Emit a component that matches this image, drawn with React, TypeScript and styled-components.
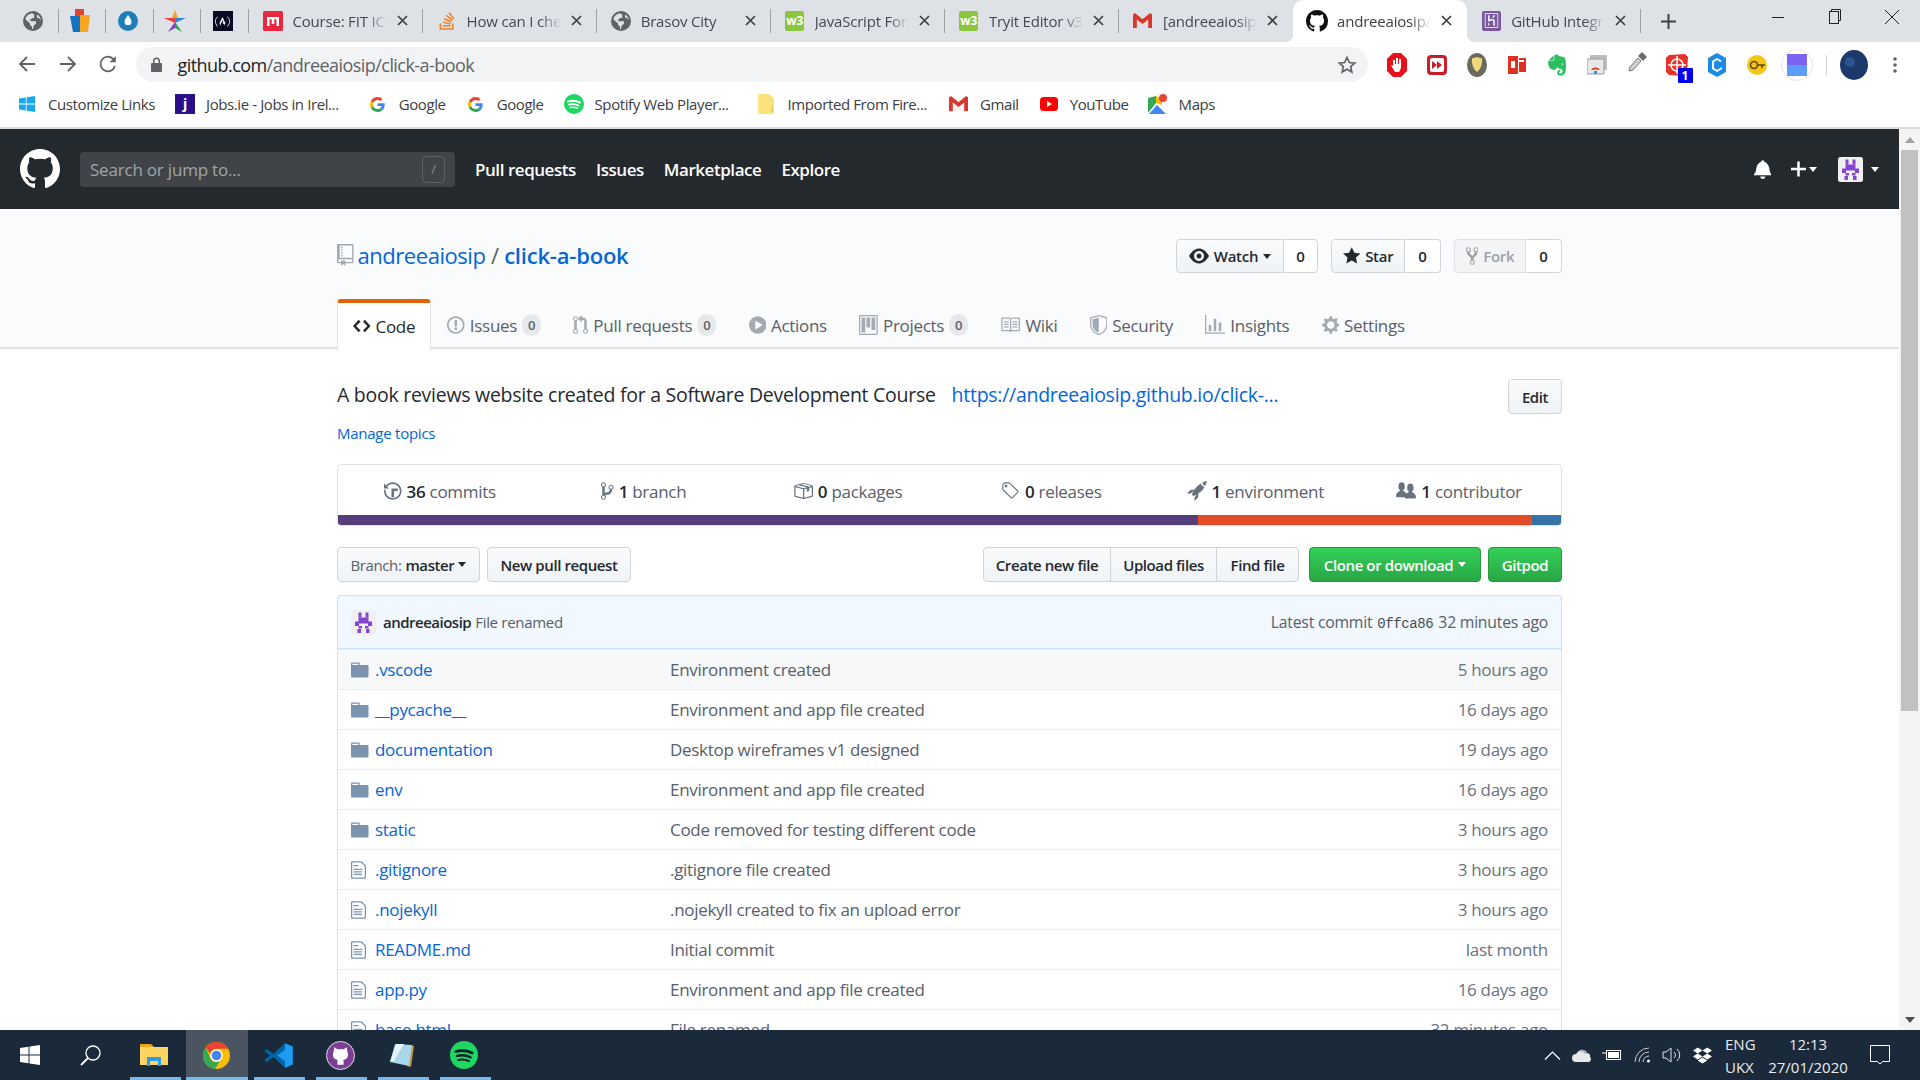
import React from "react";
import styled, { createGlobalStyle } from "styled-components";
import { FaEvernote, FaDropbox, FaStackOverflow, FaFreeCodeCamp } from "react-icons/fa";
import { SiHeroku } from "react-icons/si";

const UI = `"Open Sans", "Noto Sans", Arial, sans-serif`;
const Global = createGlobalStyle`
  html, body { margin: 0; padding: 0; height: 100%; overflow: hidden; background: #fff; }
  #root { height: 100vh; }
  * { box-sizing: border-box; }
  svg { display: block; flex: none; }
`;

const P: Record<string, [number, string]> = {
  github: [16, "M8 0C3.58 0 0 3.58 0 8c0 3.54 2.29 6.53 5.47 7.59.4.07.55-.17.55-.38 0-.19-.01-.82-.01-1.49-2.01.37-2.53-.49-2.69-.94-.09-.23-.48-.94-.82-1.13-.28-.15-.68-.52-.01-.53.63-.01 1.08.58 1.23.82.72 1.21 1.87.87 2.33.66.07-.52.28-.87.51-1.07-1.78-.2-3.64-.89-3.64-3.95 0-.87.31-1.59.82-2.15-.08-.2-.36-1.02.08-2.12 0 0 .67-.21 2.2.82.64-.18 1.32-.27 2-.27.68 0 1.36.09 2 .27 1.53-1.04 2.2-.82 2.2-.82.44 1.1.16 1.92.08 2.12.51.56.82 1.27.82 2.15 0 3.07-1.87 3.75-3.65 3.95.29.25.54.73.54 1.48 0 1.07-.01 1.93-.01 2.2 0 .21.15.46.55.38A8.013 8.013 0 0016 8c0-4.42-3.58-8-8-8z"],
  repo: [12, "M4 9H3V8h1v1zm0-3H3v1h1V6zm0-2H3v1h1V4zm0-2H3v1h1V2zm8-1v12c0 .55-.45 1-1 1H6v2l-1.5-1.5L3 16v-2H1c-.55 0-1-.45-1-1V1c0-.55.45-1 1-1h10c.55 0 1 .45 1 1zm-1 10H1v2h2v-1h3v1h5v-2zm0-10H2v9h9V1z"],
  code: [14, "M9.5 3L8 4.5 11.5 8 8 11.5 9.5 13 14 8 9.5 3zm-5 0L0 8l4.5 5L6 11.5 2.5 8 6 4.5 4.5 3z"],
  issue: [14, "M7 2.3c3.14 0 5.7 2.56 5.7 5.7s-2.56 5.7-5.7 5.7A5.71 5.71 0 011.3 8c0-3.14 2.56-5.7 5.7-5.7zM7 1C3.14 1 0 4.14 0 8s3.14 7 7 7 7-3.14 7-7-3.14-7-7-7zm1 3H6v5h2V4zm0 6H6v2h2v-2z"],
  pr: [12, "M11 11.28V5c-.03-.78-.34-1.47-.94-2.06C9.46 2.35 8.78 2.03 8 2H7V0L4 3l3 3V4h1c.27.02.48.11.69.31.21.2.3.42.31.69v6.28A1.993 1.993 0 0010 15a1.993 1.993 0 001-3.72zm-1 2.92c-.66 0-1.2-.55-1.2-1.2 0-.65.55-1.2 1.2-1.2.65 0 1.2.55 1.2 1.2 0 .65-.55 1.2-1.2 1.2zM4 3c0-1.11-.89-2-2-2a1.993 1.993 0 00-1 3.72v6.56A1.993 1.993 0 002 15a1.993 1.993 0 001-3.72V4.72c.59-.34 1-.98 1-1.72zm-.8 10c0 .66-.55 1.2-1.2 1.2-.65 0-1.2-.55-1.2-1.2 0-.65.55-1.2 1.2-1.2.65 0 1.2.55 1.2 1.2zM2 4.2C1.34 4.2.8 3.65.8 3c0-.65.55-1.2 1.2-1.2.65 0 1.2.55 1.2 1.2 0 .65-.55 1.2-1.2 1.2z"],
  play: [14, "M7 1a7 7 0 100 14A7 7 0 007 1zM5 4.5v7L11 8 5 4.5z"],
  project: [15, "M10 12h3V2h-3v10zm-4-2h3V2H6v8zm-4 4h3V2H2v12zm-1 1h13V1H1v14zM14 0H1a1 1 0 00-1 1v14a1 1 0 001 1h13a1 1 0 001-1V1a1 1 0 00-1-1z"],
  book: [16, "M3 5h4v1H3V5zm0 3h4V7H3v1zm0 2h4V9H3v1zm11-5h-4v1h4V5zm0 2h-4v1h4V7zm0 2h-4v1h4V9zm2-6v9c0 .55-.45 1-1 1H9.5l-1 1-1-1H2c-.55 0-1-.45-1-1V3c0-.55.45-1 1-1h5.5l1 1 1-1H15c.55 0 1 .45 1 1zm-8 .5L7.5 3H2v9h6V3.5zm7-.5H9.5l-.5.5V12h6V3z"],
  shield: [14, "M0 2l7-2 7 2v6.02C14 12.69 8.69 16 7 16c-1.69 0-7-3.31-7-7.98V2zm1 .75L7 1l6 1.75v5.268C13 12.104 8.449 15 7 15c-1.449 0-6-2.896-6-6.982V2.75zm1 .75L7 2v12c-1.207 0-5-2.482-5-5.985V3.5z"],
  graph: [16, "M16 14v1H0V0h1v14h15zM5 13H3V8h2v5zm4 0H7V3h2v10zm4 0h-2V6h2v7z"],
  gear: [14, "M14 8.77v-1.6l-1.94-.64-.45-1.09.88-1.84-1.13-1.13-1.81.91-1.09-.45-.69-1.92h-1.6l-.63 1.94-1.11.45-1.84-.88-1.13 1.13.91 1.81-.45 1.09L0 7.23v1.59l1.94.64.45 1.09-.88 1.84 1.13 1.13 1.81-.91 1.09.45.69 1.92h1.59l.63-1.94 1.11-.45 1.84.88 1.13-1.13-.92-1.81.47-1.09L14 8.75v.02zM7 11c-1.66 0-3-1.34-3-3s1.34-3 3-3 3 1.34 3 3-1.34 3-3 3z"],
  eye: [16, "M8.06 2C3 2 0 8 0 8s3 6 8.06 6C13 14 16 8 16 8s-3-6-7.94-6zM8 12c-2.2 0-4-1.78-4-4 0-2.2 1.8-4 4-4 2.22 0 4 1.8 4 4 0 2.22-1.78 4-4 4zm2-4c0 1.11-.89 2-2 2-1.11 0-2-.89-2-2 0-1.11.89-2 2-2 1.11 0 2 .89 2 2z"],
  star: [14, "M14 6l-4.9-.64L7 1 4.9 5.36 0 6l3.6 3.26L2.67 14 7 11.67 11.33 14l-.93-4.74L14 6z"],
  fork: [10, "M8 1a1.993 1.993 0 00-1 3.72V6L5 8 3 6V4.72A1.993 1.993 0 002 1a1.993 1.993 0 00-1 3.72V6.5l3 3v1.78A1.993 1.993 0 005 15a1.993 1.993 0 001-3.72V9.5l3-3V4.72A1.993 1.993 0 008 1zM2 4.2C1.34 4.2.8 3.65.8 3c0-.65.55-1.2 1.2-1.2.65 0 1.2.55 1.2 1.2 0 .65-.55 1.2-1.2 1.2zm3 10c-.66 0-1.2-.55-1.2-1.2 0-.65.55-1.2 1.2-1.2.65 0 1.2.55 1.2 1.2 0 .65-.55 1.2-1.2 1.2zm3-10c-.66 0-1.2-.55-1.2-1.2 0-.65.55-1.2 1.2-1.2.65 0 1.2.55 1.2 1.2 0 .65-.55 1.2-1.2 1.2z"],
  history: [14, "M8 13H6V6h5v2H8v5zM7 1C4.81 1 2.87 2.02 1.59 3.59L0 2v4h4L2.5 4.5C3.55 3.17 5.17 2.3 7 2.3c3.14 0 5.7 2.56 5.7 5.7s-2.56 5.7-5.7 5.7A5.71 5.71 0 011.3 8c0-.34.03-.67.09-1H.08C.03 7.33 0 7.66 0 8c0 3.86 3.14 7 7 7s7-3.14 7-7-3.14-7-7-7z"],
  branch: [10, "M10 5c0-1.11-.89-2-2-2a1.993 1.993 0 00-1 3.72v.3c-.02.52-.23.98-.63 1.38-.4.4-.86.61-1.38.63-.83.02-1.48.16-2 .45V4.72a1.993 1.993 0 00-1-3.72C.88 1 0 1.89 0 3a2 2 0 001 1.72v6.56c-.59.35-1 .99-1 1.72 0 1.11.89 2 2 2 1.11 0 2-.89 2-2 0-.53-.2-1-.53-1.36.09-.06.48-.41.59-.47.25-.11.56-.17.94-.17 1.05-.05 1.95-.45 2.75-1.25S8.95 7.77 9 6.73h-.02C9.59 6.37 10 5.73 10 5zM2 1.8c.66 0 1.2.55 1.2 1.2 0 .65-.55 1.2-1.2 1.2C1.35 4.2.8 3.65.8 3c0-.65.55-1.2 1.2-1.2zm0 12.41c-.66 0-1.2-.55-1.2-1.2 0-.65.55-1.2 1.2-1.2.65 0 1.2.55 1.2 1.2 0 .65-.55 1.2-1.2 1.2zm6-8c-.66 0-1.2-.55-1.2-1.2 0-.65.55-1.2 1.2-1.2.65 0 1.2.55 1.2 1.2 0 .65-.55 1.2-1.2 1.2z"],
  pkg: [16, "M1 4.27v7.47c0 .45.3.84.75.97l6.5 1.73c.16.05.34.05.5 0l6.5-1.73c.45-.13.75-.52.75-.97V4.27c0-.45-.3-.84-.75-.97l-6.5-1.74a1.4 1.4 0 00-.5 0L1.75 3.3c-.45.13-.75.52-.75.97zm7 9.09l-6-1.59V5l6 1.61v6.75zM2 4l2.5-.67L11 5.06l-2.5.67L2 4zm13 7.77l-6 1.59V6.61l2-.55V8.5l2-.53V5.53L15 5v6.77zm-2-7.24L6.5 2.8l2-.53L15 4l-2 .53z"],
  tag: [15, "M7.73 1.73C7.26 1.26 6.62 1 5.96 1H3.5C2.13 1 1 2.13 1 3.5v2.47c0 .66.27 1.3.73 1.77l6.06 6.06c.39.39 1.02.39 1.41 0l4.59-4.59a.996.996 0 000-1.41L7.73 1.73zM2.38 7.09c-.31-.3-.47-.7-.47-1.13V3.5c0-.88.72-1.59 1.59-1.59h2.47c.42 0 .83.16 1.13.47l6.14 6.13-4.73 4.73-6.13-6.15zM3.01 3h2v2H3V3h.01z"],
  rocket: [16, "M12.17 3.83c-.27-.27-.47-.55-.63-.88-.16-.31-.27-.66-.34-1.02-.58.33-1.16.7-1.73 1.13-.58.44-1.14.94-1.69 1.48-.7.7-1.33 1.81-1.78 2.45H3L0 10h3l2-2c-.34.77-1.02 2.98-1 3l1 1c.02.02 2.23-.64 3-1l-2 2v3l3-3v-3c.64-.45 1.75-1.09 2.45-1.78.55-.55 1.05-1.13 1.47-1.7.44-.58.81-1.16 1.14-1.72-.36-.08-.7-.19-1.03-.34a3.39 3.39 0 01-.86-.63zM16 0s-.09.38-.3 1.06c-.2.7-.55 1.58-1.06 2.66-.7-.08-1.27-.33-1.66-.75-.38-.4-.63-.95-.7-1.64C13.36.8 14.25.44 14.95.25 15.65.03 16 0 16 0z"],
  org: [16, "M16 12.999c0 .439-.45 1-1 1H7.995c-.539 0-.994-.447-.995-.999H1c-.54 0-1-.561-1-1 0-2.634 3-4 3-4s.229-.409 0-1c-.841-.621-1.058-.59-1-3 .058-2.419 1.367-3 2.5-3s2.442.58 2.5 3c.058 2.41-.159 2.379-1 3-.229.59 0 1 0 1s1.549.711 2.42 2.088C9.196 9.369 10 8.999 10 8.999s.229-.409 0-1c-.841-.62-1.058-.59-1-3 .058-2.419 1.367-3 2.5-3s2.437.581 2.495 3c.059 2.41-.158 2.38-1 3-.229.59 0 1 0 1s3.005 1.366 3.005 4"],
  folder: [14, "M13 4H7V3c0-.66-.31-1-1-1H1c-.55 0-1 .45-1 1v10c0 .55.45 1 1 1h12c.55 0 1-.45 1-1V5c0-.55-.45-1-1-1zM6 4H1V3h5v1z"],
  file: [12, "M6 5H2V4h4v1zM2 8h7V7H2v1zm0 2h7V9H2v1zm0 2h7v-1H2v1zm10-7.5V14c0 .55-.45 1-1 1H1c-.55 0-1-.45-1-1V2c0-.55.45-1 1-1h7.5L12 4.5zM11 5L8 2H1v12h10V5z"],
  bell: [14, "M14 12v1H0v-1l.73-.58c.77-.77.81-2.55 1.19-4.42C2.69 3.23 6 2 6 2c0-.55.45-1 1-1s1 .45 1 1c0 0 3.39 1.23 4.16 5 .38 1.88.42 3.66 1.19 4.42l.66.58H14zm-7 4c1.11 0 2-.89 2-2H5c0 1.11.89 2 2 2z"],
  plus: [12, "M12 9H7v5H5V9H0V7h5V2h2v5h5v2z"],
};

const Oct = ({ n, h = 20, c = "currentColor" }: { n: string; h?: number; c?: string }) => {
  const [w, d] = P[n];
  return (
    <svg width={(w * h) / 16} height={h} viewBox={`0 0 ${w} 16`} fill={c} fillRule="evenodd">
      <path d={d} />
    </svg>
  );
};

const Identicon = ({ s, bg = "#f0f0f0" }: { s: number; bg?: string }) => (
  <svg width={s} height={s} viewBox="0 0 10 10">
    <rect width="10" height="10" rx="1" fill={bg} />
    <g fill="#8545d0">
      <rect x="3" y="1" width="1.2" height="2" /><rect x="5.8" y="1" width="1.2" height="2" />
      <rect x="3" y="3" width="4" height="2.4" /><rect x="1.6" y="4.6" width="1.6" height="1.8" />
      <rect x="6.8" y="4.6" width="1.6" height="1.8" /><rect x="3" y="6.4" width="1.4" height="1" />
      <rect x="5.6" y="6.4" width="1.4" height="1" /><rect x="2.6" y="7.6" width="1.4" height="1.6" />
      <rect x="6" y="7.6" width="1.4" height="1.6" />
    </g>
  </svg>
);

const GoogleG = ({ s = 16 }: { s?: number }) => (
  <svg width={s} height={s} viewBox="0 0 48 48">
    <path fill="#EA4335" d="M24 9.5c3.54 0 6.71 1.22 9.21 3.6l6.85-6.85C35.9 2.38 30.47 0 24 0 14.62 0 6.51 5.38 2.56 13.22l7.98 6.19C12.43 13.72 17.74 9.5 24 9.5z" />
    <path fill="#4285F4" d="M46.98 24.55c0-1.57-.15-3.09-.38-4.55H24v9.02h12.94c-.58 2.96-2.26 5.48-4.78 7.18l7.73 6c4.51-4.18 7.09-10.36 7.09-17.65z" />
    <path fill="#FBBC05" d="M10.53 28.59c-.48-1.45-.76-2.99-.76-4.59s.27-3.14.76-4.59l-7.98-6.19C.92 16.46 0 20.12 0 24c0 3.88.92 7.54 2.56 10.78l7.97-6.19z" />
    <path fill="#34A853" d="M24 48c6.48 0 11.93-2.13 16.08-5.81l-7.73-6c-2.15 1.45-4.92 2.3-8.35 2.3-6.26 0-11.57-4.22-13.47-9.91l-7.98 6.19C6.51 42.62 14.62 48 24 48z" />
  </svg>
);
const Globe = () => (
  <svg width="20" height="20" viewBox="0 0 20 20">
    <circle cx="10" cy="10" r="10" fill="#5f6368" />
    <path fill="#dee1e6" d="M9 2.2C5.6 2.6 3 5 2.3 8.2L7 12.5v1.2l2 2V18c-1 0-1-.1-1-.1v.1c.6.1 1.5 0 2 0l.5-3 2.5-2.5v-2.2H8L6.5 8.5H8l1-1.5h2.2V3.5L9 2.2zM14 3.6v3.1h1.5l2.4 2.4C17.6 6.8 16 4.700 14 3.600z" />
  </svg>
);
const GmailM = ({ s = 20 }: { s?: number }) => (
  <svg width={s} height={s * 0.8} viewBox="0 0 20 16">
    <path fill="#d9d9d9" d="M3 2h14v14H3z" opacity=".3" />
    <path fill="#d8372d" d="M0 1.500 2 0l8 6.500L18 0l2 1.500V16h-4V6.800l-6 4.900-6-4.900V16H0z" />
  </svg>
);
const W3Box = styled.span`
  width: 19px; height: 20px; background: #8cc63f; border-radius: 2px; color: #fff;
  font: 700 12px/20px ${UI}; text-align: center; flex: none;
`;
const Spotify = ({ s = 20, stroke = "#fff" }: { s?: number; stroke?: string }) => (
  <svg width={s} height={s} viewBox="0 0 24 24">
    <circle cx="12" cy="12" r="12" fill="#1ed760" />
    <g fill="none" stroke={stroke} strokeLinecap="round">
      <path strokeWidth="2.400" d="M5 9c4.500-1.300 9.500-1 14 1.200" />
      <path strokeWidth="2" d="M6 12.800c4-1 8-.7 11.600 1.200" />
      <path strokeWidth="1.600" d="M7 16.300c3.300-.8 6.600-.5 9.400 1" />
    </g>
  </svg>
);
const WinLogo = ({ s, c }: { s: number; c: string }) => (
  <svg width={s} height={s} viewBox="0 0 20 20" fill={c}>
    <path d="M0 3l8.500-1.200V9.500H0zM9.500 1.600 20 0v9.500H9.500zM0 10.500h8.500v7.700L0 17zM9.500 10.500H20V20L9.500 18.400z" />
  </svg>
);
const FccBox = styled.span`
  width: 20px; height: 20px; background: #0a0a23; display: flex; align-items: center; justify-content: center; flex: none;
`;
const HerokuBox = styled.span`
  width: 19px; height: 20px; border-radius: 2px; background: #79589f; display: flex; align-items: center; justify-content: center; flex: none;
`;
const JobsIcon = styled.span`
  width: 20px; height: 20px; background: #2b0f8a; color: #fff; font: 700 14px/20px ${UI}; text-align: center; flex: none;
`;

const favs: Record<string, React.ReactNode> = {
  globe: <Globe />,
  office: (
    <svg width="22" height="24" viewBox="0 0 22 24">
      <path fill="#e0452c" d="M6 0h9v9H6z" /><path fill="#f5a623" d="M11 6h10l-2 17h-8z" /><path fill="#1573c4" d="M1 7h10v16H4z" />
    </svg>
  ),
  drop: (
    <svg width="20" height="20" viewBox="0 0 20 20">
      <circle cx="10" cy="10" r="10" fill="#1b7fb5" /><path fill="#fff" d="M10 4c2 3 3.500 4.700 3.500 6.800a3.500 3.500 0 01-7 0C6.500 8.700 8 7 10 4z" />
    </svg>
  ),
  star: (
    <svg width="22" height="24" viewBox="0 0 22 24">
      <path fill="#f2a51f" d="M11 1l3 8H11z" /><path fill="#e8413a" d="M0 9h11v5z" /><path fill="#2e8ad8" d="M22 9H11v5z" /><path fill="#2da44e" d="M11 13l7 10-7-4z" /><path fill="#7a3fb8" d="M11 13l-7 10 7-4z" /><path fill="#f2a51f" d="M11 1L8 9H11z" />
    </svg>
  ),
  fcc: <FccBox><FaFreeCodeCamp size={15} color="#fff" /></FccBox>,
  moodle: (
    <svg width="20" height="20" viewBox="0 0 20 20">
      <rect width="20" height="20" rx="1.500" fill="#e8283e" />
      <path fill="#fff" d="M4 6h12v9h-2.500V8.300h-2.200V13H8.700V8.300H6.500V15H4z" />
    </svg>
  ),
  so: <FaStackOverflow size={20} color="#f48024" />,
  w3: <W3Box>w3</W3Box>,
  gmail: <GmailM s={19} />,
  github: <Oct n="github" h={22} c="#111" />,
  heroku: <HerokuBox><SiHeroku size={15} color="#fff" /></HerokuBox>,
};

const Shell = styled.div`
  height: 100vh; display: flex; flex-direction: column; font-family: ${UI}; overflow: hidden;
`;
const TabStrip = styled.div`
  height: 42px; flex: none; background: #dee1e6; display: flex; padding-left: 11px;
`;
const PinnedTab = styled.div`
  width: 47.500px; height: 42px; position: relative; display: flex; align-items: center; justify-content: center; padding-right: 4px;
  &::after { content: ""; position: absolute; right: 0; top: 9px; height: 24px; width: 1px; background: #9da1a6; }
`;
const Tab = styled.div<{ $active?: boolean; $nosep?: boolean }>`
  width: 174.100px; height: 42px; position: relative; display: flex; align-items: center; padding: 0 14px 1px 14px; gap: 10px;
  background: ${(p) => (p.$active ? "#fff" : "transparent")};
  border-radius: ${(p) => (p.$active ? "10px 10px 0 0" : "0")};
  color: ${(p) => (p.$active ? "#3c4043" : "#45494f")};
  &::after {
    content: ""; position: absolute; right: 0; top: 9px; height: 24px; width: 1px;
    background: ${(p) => (p.$nosep || p.$active ? "transparent" : "#9da1a6")};
  }
`;
const ActiveFlare = styled.span<{ $side: "left" | "right" }>`
  position: absolute; bottom: 0; width: 8px; height: 8px;
  ${(p) => p.$side}: -8px;
  background: radial-gradient(circle at ${(p) => (p.$side === "left" ? "0 0" : "100% 0")}, transparent 8px, #fff 8.500px);
`;
const TabIcon = styled.span`
  width: 20px; height: 22px; display: flex; align-items: center; justify-content: center; flex: none;
`;
const TabTitle = styled.span`
  flex: 1; min-width: 0; overflow: hidden; white-space: nowrap; font-size: 15px; line-height: 20px; letter-spacing: -0.2px;
  -webkit-mask-image: linear-gradient(90deg, #000 78%, transparent 100%);
  mask-image: linear-gradient(90deg, #000 78%, transparent 100%);
`;
const TabClose = styled.svg`
  width: 11px; height: 11px; flex: none; margin-right: 1px; stroke: #3c4043; stroke-width: 1.700;
`;
const NewTab = styled.div`
  width: 54px; display: flex; align-items: center; justify-content: center; height: 42px;
`;
const WinControls = styled.div`
  margin-left: auto; display: flex; height: 42px;
`;
const WinBtn = styled.div`
  width: 56.670px; height: 34px; display: flex; align-items: center; justify-content: center;
`;

const Toolbar = styled.div`
  height: 42px; flex: none; background: #fff; display: flex; align-items: center; padding-left: 17px;
`;
const NavBtn = styled.div`
  width: 40.500px; display: flex; padding-left: 1px; align-items: center; height: 24px; margin-top: 2px;
`;
const Omnibox = styled.div`
  width: 1232px; margin-left: -3px; height: 35px; margin-top: 3px; border-radius: 18px; background: #f1f3f4; display: flex; align-items: center; padding: 0 11px 0 15px;
`;
const Url = styled.span`
  font-size: 18px; color: #5f6368; margin-left: 16px; flex: 1; letter-spacing: -0.55px;
  b { color: #202124; font-weight: 400; }
`;
const Exts = styled.div`
  display: flex; align-items: center; margin-left: 9px; margin-top: 3px;
`;
const Ext = styled.div`
  width: 40px; height: 30px; display: flex; align-items: center; justify-content: center; position: relative;
`;
const ExtBadge = styled.span`
  position: absolute; right: 4px; bottom: -3px; width: 15px; height: 15px; background: #0000f0; color: #fff; font: 700 12px/15px ${UI}; text-align: center; border-radius: 1px;
`;
const ExtSep = styled.span`
  width: 1px; height: 20px; background: #d0d3d7; margin: 0 13px 0 9px;
`;
const Dots = styled.svg`
  margin-left: 25px;
`;

const Bookmarks = styled.div`
  height: 45px; flex: none; background: #fff; display: flex; align-items: center; padding-left: 17px; border-bottom: 2px solid #dcdcdc; gap: 21px; padding-bottom: 3px;
`;
const Bm = styled.div<{ $ml?: number }>`
  display: flex; align-items: center; gap: 11px; font-size: 15px; color: #3c4043; letter-spacing: -0.4px; white-space: nowrap;
  margin-left: ${(p) => p.$ml || 0}px;
`;
const BmIcon = styled.span`
  width: 20px; height: 20px; display: flex; align-items: center; justify-content: center; flex: none;
`;

const Below = styled.div`
  flex: 1; min-height: 0; display: flex;
`;
const Page = styled.div`
  flex: 1; min-width: 0; overflow: hidden; background: #fff; color: #24292e;
`;
const Scrollbar = styled.div`
  width: 21px; flex: none; background: #f4f4f4; display: flex; flex-direction: column; padding-left: 2px; padding-right: 2px;
`;
const ScrollArrow = styled.div<{ $down?: boolean }>`
  height: 21px; flex: none; display: flex; align-items: center; justify-content: center;
  &::before { content: ""; border-left: 5px solid transparent; border-right: 5px solid transparent;
    ${(p) => (p.$down ? "border-top: 6px solid #505050;" : "border-bottom: 6px solid #a3a3a3;")} }
`;
const Thumb = styled.div`
  height: 561px; background: #c1c1c1; flex: none;
`;
const ScrollRest = styled.div`flex: 1;`;

const Header = styled.header`
  height: 80px; background: #24292e; display: flex; align-items: center; padding: 0 20px; color: #fff;
`;
const Search = styled.div`
  width: 375px; height: 35px; margin-left: 20px; border-radius: 4px; background: #404448; display: flex; align-items: center; justify-content: space-between; padding: 0 10px;
  color: #a0a4a8; font-size: 17px; letter-spacing: -0.2px;
`;
const Slash = styled.span`
  width: 23px; height: 27px; border: 1px solid #5d6165; border-radius: 4px; display: flex; align-items: center; justify-content: center; font-size: 13px; color: #8b8f93;
`;
const HeadNav = styled.nav`
  display: flex; gap: 20px; margin-left: 20px; font-size: 17px; font-weight: 600; letter-spacing: -0.45px;
`;
const HeadRight = styled.div`
  margin-left: auto; display: flex; align-items: center;
`;
const HGap = styled.span<{ $w: number }>`
  width: ${(p) => p.$w}px; flex: none;
`;
const Caret = styled.span<{ $c?: string }>`
  display: inline-block; border-left: 4.500px solid transparent; border-right: 4.500px solid transparent;
  border-top: 5px solid ${(p) => p.$c || "currentColor"}; flex: none;
`;

const Pagehead = styled.div`
  height: 140px; background: #fafbfc; border-bottom: 2px solid #e1e4e8;
`;
const Container = styled.div`
  width: 1225px; margin: 0 auto;
`;
const TitleRow = styled.div`
  height: 90px; padding-top: 30px; display: flex; align-items: flex-start;
`;
const Title = styled.h1`
  margin: 0; height: 32px; font-size: 22px; font-weight: 400; display: flex; align-items: center; gap: 4px; color: #586069; letter-spacing: -0.450px;
  strong { font-weight: 600; color: #0366d6; letter-spacing: -0.2px; }
  a { color: #0366d6; }
`;
const TitleSlash = styled.span`
  margin: 0 1.500px;
`;
const Actions = styled.div`
  margin-left: auto; display: flex; gap: 13px;
`;
const Social = styled.div`
  display: flex; height: 34px;
`;
const SocialBtn = styled.div<{ $w: number; $off?: boolean }>`
  width: ${(p) => p.$w}px; display: flex; align-items: center; justify-content: center; gap: 5px;
  border: 1px solid ${(p) => (p.$off ? "#dfe2e5" : "#d1d5da")}; border-radius: 4px 0 0 4px;
  background: ${(p) => (p.$off ? "#f3f4f6" : "linear-gradient(#fafbfc, #eff3f6)")};
  color: ${(p) => (p.$off ? "#9ca1a8" : "#24292e")};
  font-size: 15px; font-weight: 600; letter-spacing: -0.3px;
`;
const SocialCount = styled.div<{ $w: number }>`
  width: ${(p) => p.$w}px; display: flex; align-items: center; justify-content: center; background: #fff;
  border: 1px solid #d1d5da; border-left: 0; border-radius: 0 4px 4px 0; font-size: 15px; font-weight: 600; color: #24292e;
`;
const TabNav = styled.div`
  display: flex; height: 50px; margin-bottom: -2px; position: relative;
`;
const RepoTab = styled.div<{ $sel?: boolean }>`
  height: ${(p) => (p.$sel ? "52px" : "50px")}; display: flex; align-items: center; gap: 5px;
  padding: 0 ${(p) => (p.$sel ? "15px" : "16.150px")}; padding-top: ${(p) => (p.$sel ? "0" : "2px")};
  padding-bottom: ${(p) => (p.$sel ? "2px" : "0")};
  font-size: 17px; letter-spacing: -0.3px; color: ${(p) => (p.$sel ? "#24292e" : "#586069")};
  background: ${(p) => (p.$sel ? "#fff" : "transparent")};
  border: ${(p) => (p.$sel ? "1px solid #e1e4e8" : "0")};
  border-top: ${(p) => (p.$sel ? "4px solid #e36209" : "0")};
  border-bottom: 0;
  border-radius: ${(p) => (p.$sel ? "4px 4px 0 0" : "0")};
  svg { color: ${(p) => (p.$sel ? "#24292e" : "#a3aab1")}; }
`;
const Counter = styled.span`
  min-width: 19px; height: 22px; border-radius: 11px; background: #e6e8eb; display: flex; align-items: center; justify-content: center; font-size: 13px; font-weight: 600; color: #586069;
`;
const Desc = styled.div`
  height: 35px; margin-top: 30px; display: flex; align-items: flex-start; font-size: 19.500px; line-height: 32px; letter-spacing: -0.27px; color: #24292e;
  a { color: #0366d6; margin-left: 16px; }
`;
const Btn = styled.div<{ $w: number }>`
  width: ${(p) => p.$w}px; height: 35px; display: flex; align-items: center; justify-content: center; gap: 4px; flex: none;
  border: 1px solid #d0d4d9; border-radius: 4px; background: linear-gradient(#fafbfc, #eff3f6);
  color: #24292e; font-size: 15px; line-height: 20px; font-weight: 600; letter-spacing: -0.4px; white-space: nowrap;
`;
const DimLabel = styled.span`
  color: #586069; font-weight: 400;
`;
const EditBtn = styled(Btn)`
  margin-left: auto;
`;
const Topics = styled.div`
  font-size: 15px; color: #0366d6; letter-spacing: -0.25px; margin-top: 9px; height: 20px; line-height: 20px;
`;
const Summary = styled.div`
  margin-top: 21px; height: 62px; border: 1px solid #dfe2e5; border-radius: 4px; overflow: hidden; display: flex; flex-direction: column;
`;
const StatRow = styled.div`
  flex: 1; display: grid; grid-template-columns: repeat(6, 1fr); align-items: center; padding-top: 2px;
`;
const Stat = styled.div`
  display: flex; align-items: center; justify-content: center; gap: 5px; font-size: 17px; color: #586069; letter-spacing: -0.3px; white-space: nowrap;
  b { font-weight: 600; color: #24292e; }
  svg { color: #6a737d; }
`;
const LangBar = styled.div`
  height: 10px; flex: none; display: flex;
`;
const Lang = styled.div<{ $w: number; $c: string }>`
  width: ${(p) => p.$w}px; background: ${(p) => p.$c}; flex: none;
`;
const Toolrow = styled.div`
  margin-top: 21px; height: 35px; display: flex; gap: 7px;
`;
const Spacer = styled.div`flex: 1;`;
const BtnGroup = styled.div`
  display: flex; margin-right: 3px;
`;
const GroupBtn = styled(Btn)<{ $pos: "l" | "m" | "r" }>`
  margin-left: ${(p) => (p.$pos === "l" ? 0 : "-1px")};
  border-radius: ${(p) => (p.$pos === "l" ? "4px 0 0 4px" : p.$pos === "r" ? "0 4px 4px 0" : "0")};
`;
const GreenBtn = styled.div<{ $w: number }>`
  width: ${(p) => p.$w}px; height: 35px; display: flex; align-items: center; justify-content: center; gap: 5px;
  border: 1px solid #26963f; border-radius: 4px; background: linear-gradient(#34d058, #28a745);
  color: #fff; font-size: 15px; font-weight: 600; letter-spacing: -0.4px; white-space: nowrap;
`;
const Files = styled.div`
  margin-top: 13px; border: 1px solid #dfe2e5; border-top: 0; border-radius: 4px 4px 0 0;
`;
const Tease = styled.div`
  height: 54px; margin: 0 -1px; background: #f1f8ff; border: 1px solid #c8e1ff; border-radius: 4px 4px 0 0; display: flex; align-items: center; padding: 0 13px; font-size: 15px; letter-spacing: -0.3px; color: #586069;
  b { font-weight: 600; color: #24292e; margin-left: 7px; margin-right: 4px; letter-spacing: -0.5px; }
`;
const TeaseRight = styled.span`
  margin-left: auto; font-size: 15.800px; letter-spacing: -0.25px;
  code { font-family: "Liberation Mono", "DejaVu Sans Mono", monospace; font-size: 14px; letter-spacing: -0.4px; color: #444d56; margin: 0 5px; }
`;
const Row = styled.div<{ $hl?: boolean }>`
  height: 40px; display: grid; grid-template-columns: 24px 295px 1fr auto; align-items: center; padding: 0 13px;
  background: ${(p) => (p.$hl ? "#f6f8fa" : "#fff")}; border-top: 1px solid #eaecef; font-size: 17px; letter-spacing: -0.3px;
  &:first-of-type { border-top: 0; }
`;
const RowIcon = styled.span`
  color: #7c93ae;
`;
const RowName = styled.span`color: #0366d6;`;
const RowMsg = styled.span`color: #586069;`;
const RowAge = styled.span`color: #6a737d;`;

const Taskbar = styled.footer`
  height: 50px; flex: none; background: #1b2a3a; display: flex; color: #fff;
`;
const TaskPlain = styled.div<{ $w: number; $mr?: number }>`
  width: ${(p) => p.$w}px; margin-right: ${(p) => p.$mr || 0}px; display: flex; align-items: center; justify-content: center;
`;
const TaskCell = styled.div<{ $active?: boolean }>`
  width: 62px; position: relative; display: flex; align-items: center; justify-content: center; padding-right: 2px;
  background: ${(p) => (p.$active ? "#4a5561" : "transparent")};
  &::after { content: ""; position: absolute; bottom: 0; height: 3px; background: #76b9ed;
    left: ${(p) => (p.$active ? "0" : "5.500px")}; right: ${(p) => (p.$active ? "0" : "5.500px")}; }
`;
const Tray = styled.div`
  margin-left: auto; display: flex; align-items: center; padding-right: 30px;
`;
const TrayIcon = styled.div`
  width: 30px; display: flex; justify-content: center;
`;
const Lng = styled.div`
  margin-left: 8px; width: 36px; font-size: 15px; line-height: 23px; padding-top: 1px; color: #e9ecef;
`;
const Clock = styled.div`
  width: 88px; margin: 0 0 0 3px; text-align: center; font-size: 15px; line-height: 23px; padding-top: 1px; color: #e9ecef;
`;
const Notif = styled.div`
  margin-left: 18px;
`;

const tabs = [
  ["moodle", "Course: FIT ICT"],
  ["so", "How can I check"],
  ["globe", "Brasov City"],
  ["w3", "JavaScript Form"],
  ["w3", "Tryit Editor v3.6"],
  ["gmail", "[andreeaiosip/c"],
  ["github", "andreeaiosip/c"],
  ["heroku", "GitHub Integrat"],
];

const extIcons: React.ReactNode[] = [
  <svg width="20" height="24" viewBox="0 0 20 24"><path fill="#e8101a" d="M6 0h8l6 6v12l-6 6H6l-6-6V6z" /><path fill="#fff" d="M6 7h2v4h1V5h2v6h1V6h2v9l-2 4H8l-3-5-1-2 2 1z" /></svg>,
  <svg width="20" height="20" viewBox="0 0 20 20"><rect width="20" height="20" rx="4" fill="#c81e2a" /><rect x="3" y="3" width="14" height="14" rx="2" fill="#fff" /><path fill="#c81e2a" d="M5 6l5 4-5 4zM10 6l5 4-5 4z" /></svg>,
  <svg width="20" height="24" viewBox="0 0 20 24"><ellipse cx="10" cy="12" rx="10" ry="12" fill="#6a6a60" /><path fill="#f0d878" d="M10 4c2 1 4 1.500 5 1 .5 6-1 11-5 14-4-3-5.500-8-5-14 1 .5 3 0 5-1z" /></svg>,
  <svg width="18" height="22" viewBox="0 0 18 22"><path fill="#e03024" d="M0 2h10v18H0zM11 4h7v14h-7z" /><path fill="#fff" d="M11 6h5v2h-5zM3 7h4v7H3z" /></svg>,
  <FaEvernote size={24} color="#2dbe60" />,
  <svg width="20" height="20" viewBox="0 0 20 20"><rect x="3" y="0" width="17" height="15" rx="1" fill="#bdbdbd" /><rect x="0" y="4" width="17" height="15" rx="1" fill="#e8e8e8" stroke="#999" /><path fill="#ea4335" d="M4 15a5 5 0 019 0h-3a2 2 0 00-3 0z" /><path fill="#4285f4" d="M7 16h3v3H7z" /></svg>,
  <svg width="20" height="26" viewBox="0 0 20 26"><path fill="#6b6b6b" d="M15 0l5 5-4 4-5-5z" /><path fill="#d0d0d0" stroke="#777" d="M11 6l3 3-8 9-4 1 1-4z" /></svg>,
  <svg width="22" height="22" viewBox="0 0 22 22"><path fill="#e6332a" d="M3 1l16-1 3 3-1 16-3 3-15-1-3-3V4z" /><circle cx="11" cy="11" r="6" fill="none" stroke="#fff" strokeWidth="1.500" /><path stroke="#fff" strokeWidth="1.500" d="M11 2v18M2 11h18" /></svg>,
  <svg width="18" height="24" viewBox="0 0 18 24"><path fill="#1c8be6" d="M9 0l9 5v14l-9 5-9-5V5z" /><path fill="#fff" d="M9 5l5 3-2 1-3-2-3 2v6l3 2 5-3v2l-5 3-5-3V8z" /></svg>,
  <svg width="20" height="20" viewBox="0 0 20 20"><circle cx="10" cy="10" r="10" fill="#f5c518" /><circle cx="7" cy="10" r="3.500" fill="none" stroke="#5b4a10" strokeWidth="1.600" /><path stroke="#5b4a10" strokeWidth="1.600" d="M10 10h8M15 10v3" /></svg>,
  <svg width="32" height="34" viewBox="0 0 32 34"><circle cx="16" cy="17" r="15.500" fill="#fff" stroke="#e6e6e6" /><rect x="6" y="6" width="20" height="11" fill="#7b62f2" /><rect x="6" y="17" width="20" height="11" fill="#5a9cf8" /></svg>,
];

const rows: [string, string, string, boolean][] = [
  [".vscode", "Environment created", "5 hours ago", true],
  ["__pycache__", "Environment and app file created", "16 days ago", true],
  ["documentation", "Desktop wireframes v1 designed", "19 days ago", true],
  ["env", "Environment and app file created", "16 days ago", true],
  ["static", "Code removed for testing different code", "3 hours ago", true],
  [".gitignore", ".gitignore file created", "3 hours ago", false],
  [".nojekyll", ".nojekyll created to fix an upload error", "3 hours ago", false],
  ["README.md", "Initial commit", "last month", false],
  ["app.py", "Environment and app file created", "16 days ago", false],
  ["base.html", "File renamed", "32 minutes ago", false],
];

const repoTabs: [string, string, boolean][] = [
  ["issue", "Issues", true], ["pr", "Pull requests", true], ["play", "Actions", false], ["project", "Projects", true],
  ["book", "Wiki", false], ["shield", "Security", false], ["graph", "Insights", false], ["gear", "Settings", false],
];
const stats: [string, string, string][] = [
  ["history", "36", "commits"], ["branch", "1", "branch"], ["pkg", "0", "packages"],
  ["tag", "0", "releases"], ["rocket", "1", "environment"], ["org", "1", "contributor"],
];

export default function App() {
  return (
    <Shell>
      <Global />
      <TabStrip>
        {["globe", "office", "drop", "star", "fcc"].map((k, i) => (
          <PinnedTab key={i}>{favs[k]}</PinnedTab>
        ))}
        {tabs.map(([f, t], i) => (
          <Tab key={i} $active={i === 6} $nosep={i === 5}>
            {i === 6 && <ActiveFlare $side="left" />}
            {i === 6 && <ActiveFlare $side="right" />}
            <TabIcon>{favs[f]}</TabIcon>
            <TabTitle>{t}</TabTitle>
            <TabClose viewBox="0 0 11 11"><path d="M1 1l9 9M10 1l-9 9" /></TabClose>
          </Tab>
        ))}
        <NewTab>
          <svg width="15" height="15" viewBox="0 0 15 15"><path d="M7.500 0v15M0 7.500h15" stroke="#3c4043" strokeWidth="2" /></svg>
        </NewTab>
        <WinControls>
          <WinBtn><svg width="12" height="1"><rect width="12" height="1" fill="#222" /></svg></WinBtn>
          <WinBtn><svg width="14" height="16" viewBox="0 0 14 16" fill="none" stroke="#222"><path d="M3.500 2.500V.5h9v11h-2" /><rect x="1.500" y="2.500" width="9" height="12" /></svg></WinBtn>
          <WinBtn><svg width="14" height="14" viewBox="0 0 14 14" stroke="#222"><path d="M0 0l14 14M14 0L0 14" /></svg></WinBtn>
        </WinControls>
      </TabStrip>

      <Toolbar>
        <NavBtn><svg width="18" height="18" viewBox="0 0 18 18" fill="none" stroke="#5f6368" strokeWidth="1.800"><path d="M17 9H2M9 2L2 9l7 7" /></svg></NavBtn>
        <NavBtn><svg width="18" height="18" viewBox="0 0 18 18" fill="none" stroke="#5f6368" strokeWidth="1.800"><path d="M1 9h15M9 2l7 7-7 7" /></svg></NavBtn>
        <NavBtn><svg width="18" height="18" viewBox="0 0 18 18" fill="none" stroke="#5f6368" strokeWidth="1.800"><path d="M15.500 6A7.300 7.300 0 109 16.300 7.300 7.300 0 0015.800 11" /><path fill="#5f6368" stroke="none" d="M16.800 1v6.300h-6.300z" /></svg></NavBtn>
        <Omnibox>
          <svg width="11" height="15" viewBox="0 0 11 15"><path fill="#5f6368" d="M1 6h1V4a3.500 3.500 0 017 0v2h1a1 1 0 011 1v7a1 1 0 01-1 1H1a1 1 0 01-1-1V7a1 1 0 011-1zm2.500 0h4V4a2 2 0 00-4 0z" /></svg>
          <Url><b>github.com</b>/andreeaiosip/click-a-book</Url>
          <svg width="20" height="20" viewBox="0 0 24 24" fill="none" stroke="#5f6368" strokeWidth="2"><path d="M12 3l2.800 6 6.500.7-4.900 4.300 1.400 6.500L12 17.200 6.200 20.500 7.600 14 2.700 9.700 9.200 9z" /></svg>
        </Omnibox>
        <Exts>
          {extIcons.map((e, i) => (
            <Ext key={i}>{e}{i === 7 && <ExtBadge>1</ExtBadge>}</Ext>
          ))}
          <ExtSep />
          <svg width="28" height="30" viewBox="0 0 28 30"><ellipse cx="14" cy="15" rx="14" ry="15" fill="#1b3a6b" /><circle cx="10" cy="12" r="5" fill="#2a5590" /></svg>
          <Dots width="4" height="16" viewBox="0 0 4 16" fill="#5f6368"><circle cx="2" cy="2" r="1.800" /><circle cx="2" cy="8" r="1.800" /><circle cx="2" cy="14" r="1.800" /></Dots>
        </Exts>
      </Toolbar>

      <Bookmarks>
        <Bm><BmIcon><WinLogo s={16} c="#18a8ee" /></BmIcon>Customize Links</Bm>
        <Bm $ml={-1}><BmIcon><JobsIcon>j</JobsIcon></BmIcon>Jobs.ie - Jobs in Irel...</Bm>
        <Bm $ml={8}><BmIcon><GoogleG s={15} /></BmIcon>Google</Bm>
        <Bm $ml={-1}><BmIcon><GoogleG s={15} /></BmIcon>Google</Bm>
        <Bm $ml={-1}><BmIcon><Spotify s={20} /></BmIcon>Spotify Web Player...</Bm>
        <Bm $ml={7}><BmIcon><svg width="17" height="20" viewBox="0 0 17 20"><path fill="#fbe27d" d="M1 0h10l5 4v15a1 1 0 01-1 1H1a1 1 0 01-1-1V1a1 1 0 011-1z" /><path fill="#e8c456" d="M15 10v8h-2z" /></svg></BmIcon>Imported From Fire...</Bm>
        <Bm $ml={1}><BmIcon><GmailM s={19} /></BmIcon>Gmail</Bm>
        <Bm $ml={-1}><BmIcon><svg width="18" height="14" viewBox="0 0 18 14"><rect width="18" height="14" rx="3.500" fill="#f00" /><path fill="#fff" d="M7 4l5 3-5 3z" /></svg></BmIcon>YouTube</Bm>
        <Bm $ml={-2}><BmIcon><svg width="19" height="20" viewBox="0 0 19 20"><path fill="#34a853" d="M0 4l8-2v7L0 19z" /><path fill="#fbbc05" d="M8 2l6 3v6L8 9z" /><path fill="#4285f4" d="M1 20l8-9 9 9z" /><circle cx="15" cy="4" r="4" fill="#ea4335" /></svg></BmIcon>Maps</Bm>
      </Bookmarks>

      <Below>
        <Page>
          <Header>
            <Oct n="github" h={40} c="#fff" />
            <Search>Search or jump to...<Slash>/</Slash></Search>
            <HeadNav><span>Pull requests</span><span>Issues</span><span>Marketplace</span><span>Explore</span></HeadNav>
            <HeadRight>
              <Oct n="bell" h={20} c="#fff" />
              <HGap $w={20} />
              <Oct n="plus" h={20} c="#fff" />
              <HGap $w={3} />
              <Caret $c="#fff" />
              <HGap $w={21} />
              <Identicon s={25} bg="#f0f0f0" />
              <HGap $w={8} />
              <Caret $c="#fff" />
            </HeadRight>
          </Header>
          <Pagehead>
            <Container>
              <TitleRow>
                <Title>
                  <Oct n="repo" h={22} c="#a3aab1" />
                  <a>andreeaiosip</a><TitleSlash>/</TitleSlash><strong>click-a-book</strong>
                </Title>
                <Actions>
                  <Social>
                    <SocialBtn $w={108}><Oct n="eye" h={20} />Watch<Caret /></SocialBtn>
                    <SocialCount $w={34}>0</SocialCount>
                  </Social>
                  <Social>
                    <SocialBtn $w={74}><Oct n="star" h={20} />Star</SocialBtn>
                    <SocialCount $w={36}>0</SocialCount>
                  </Social>
                  <Social>
                    <SocialBtn $w={72} $off><Oct n="fork" h={20} />Fork</SocialBtn>
                    <SocialCount $w={36}>0</SocialCount>
                  </Social>
                </Actions>
              </TitleRow>
              <TabNav>
                <RepoTab $sel><Oct n="code" h={20} />Code</RepoTab>
                {repoTabs.map(([ic, t, c]) => (
                  <RepoTab key={t}><Oct n={ic} h={20} />{t}{c && <Counter>0</Counter>}</RepoTab>
                ))}
              </TabNav>
            </Container>
          </Pagehead>
          <Container>
            <Desc>
              A book reviews website created for a Software Development Course
              <a>https://andreeaiosip.github.io/click-...</a>
              <EditBtn $w={54}>Edit</EditBtn>
            </Desc>
            <Topics>Manage topics</Topics>
            <Summary>
              <StatRow>
                {stats.map(([ic, n, l]) => (
                  <Stat key={l}><Oct n={ic} h={20} /><span><b>{n}</b> {l}</span></Stat>
                ))}
              </StatRow>
              <LangBar>
                <Lang $w={860} $c="#563d7c" />
                <Lang $w={334} $c="#e34c26" />
                <Lang $w={29} $c="#3572a5" />
              </LangBar>
            </Summary>
            <Toolrow>
              <Btn $w={143}><DimLabel>Branch:</DimLabel> master <Caret /></Btn>
              <Btn $w={144}>New pull request</Btn>
              <Spacer />
              <BtnGroup>
                <GroupBtn $pos="l" $w={128}>Create new file</GroupBtn>
                <GroupBtn $pos="m" $w={107}>Upload files</GroupBtn>
                <GroupBtn $pos="r" $w={83}>Find file</GroupBtn>
              </BtnGroup>
              <GreenBtn $w={172}>Clone or download <Caret /></GreenBtn>
              <GreenBtn $w={74}>Gitpod</GreenBtn>
            </Toolrow>
            <Files>
              <Tease>
                <Identicon s={25} />
                <b>andreeaiosip</b>File renamed
                <TeaseRight>Latest commit<code>0ffca86</code>32 minutes ago</TeaseRight>
              </Tease>
              {rows.map(([n, m, a, f], i) => (
                <Row key={n} $hl={i === 0}>
                  <RowIcon><Oct n={f ? "folder" : "file"} h={20} /></RowIcon>
                  <RowName>{n}</RowName>
                  <RowMsg>{m}</RowMsg>
                  <RowAge>{a}</RowAge>
                </Row>
              ))}
            </Files>
          </Container>
        </Page>
        <Scrollbar>
          <ScrollArrow />
          <Thumb />
          <ScrollRest />
          <ScrollArrow $down />
        </Scrollbar>
      </Below>

      <Taskbar>
        <TaskPlain $w={60}><WinLogo s={20} c="#fff" /></TaskPlain>
        <TaskPlain $w={60} $mr={4}>
          <svg width="21" height="21" viewBox="0 0 21 21" fill="none" stroke="#fff" strokeWidth="1.300"><circle cx="13" cy="8" r="7" /><path d="M8 13l-7 7" strokeWidth="1.800" /></svg>
        </TaskPlain>
        <TaskCell>
          <svg width="28" height="24" viewBox="0 0 28 24"><path fill="#e8a71c" d="M0 1h11l3 3h-14z" /><path fill="#fcd462" d="M0 4h28v18H0z" /><path fill="#2f9be0" d="M7 14h14v9h-3v-5h-8v5H7z" /></svg>
        </TaskCell>
        <TaskCell $active>
          <svg width="27" height="27" viewBox="0 0 48 48">
            <circle cx="24" cy="24" r="24" fill="#fbbc05" />
            <path fill="#ea4335" d="M24 0a24 24 0 0120.800 12H24a12 12 0 00-11.500 8.300L4.800 9.600A24 24 0 0124 0z" />
            <path fill="#34a853" d="M4.800 9.600A24 24 0 0021.500 47.900L29.500 34.700a12 12 0 01-16.400-5.400z" />
            <circle cx="24" cy="24" r="11" fill="#fff" /><circle cx="24" cy="24" r="8.500" fill="#4285f4" />
          </svg>
        </TaskCell>
        <TaskCell>
          <svg width="31" height="31" viewBox="0 0 24 24"><path fill="#0065a9" d="M1 8.500l2-1.500 5 3.800L17 2.500l6 2.500v14l-6 2.500-9-8.300L3 17l-2-1.500 4.500-3.500z" /><path fill="#1f9cf0" d="M17 2.500l6 2.500v14l-6 2.500V7.500L11 12l6 4.500z" /></svg>
        </TaskCell>
        <TaskCell>
          <svg width="29" height="29" viewBox="0 0 29 29"><circle cx="14.500" cy="14.500" r="14" fill="#7b3f98" stroke="#ddd" /><g transform="translate(4.500 5) scale(1.250)"><path fill="#fff" d="M3 1l2.500 1.500h5L13 1l.5 3.500c1 2 .5 5-1.500 6-.7.400-1.500.5-2 .6.500.4.500 1 .5 1.700V15H5.500v-2.200C5.500 12 5.500 11.500 6 11.100c-.5-.1-1.300-.2-2-.6-2-1-2.500-4-1.500-6z" /></g></svg>
        </TaskCell>
        <TaskCell>
          <svg width="28" height="28" viewBox="0 0 28 28"><path fill="#c49a3e" d="M22 4l4 1-3 21-4-1z" /><path fill="#a9d6e8" d="M7 3l17 1-3 21L2 21z" /><path fill="#e6f4fa" d="M8 3h8L6 20l-4 1z" /></svg>
        </TaskCell>
        <TaskCell>
          <Spotify s={28} stroke="#13202b" />
        </TaskCell>
        <Tray>
          <TrayIcon><svg width="17" height="9" viewBox="0 0 17 9" fill="none" stroke="#fff" strokeWidth="1.200"><path d="M1 8.500l7.500-7.500L16 8.500" /></svg></TrayIcon>
          <TrayIcon><svg width="20" height="13" viewBox="0 0 20 13"><path fill="#aab2ba" d="M5 4a6 6 0 0110-1l-4 5-5-2z" /><path fill="#e6e8ea" d="M4 13a4 4 0 010-8 5 5 0 019 0 3 3 0 015 3 3 3 0 01-3 5z" /></svg></TrayIcon>
          <TrayIcon><svg width="20" height="12" viewBox="0 0 20 12" fill="none" stroke="#fff"><rect x="4.500" y="1.500" width="14" height="9" /><rect x="6" y="3" width="11" height="6" fill="#fff" stroke="none" /><path d="M0 4h4" /></svg></TrayIcon>
          <TrayIcon><svg width="17" height="16" viewBox="0 0 17 16" fill="none" stroke="#c8ccd0"><path d="M1 15A14 14 0 0115 1M5 15A10 10 0 0115 5M9 15a6 6 0 016-6" /><circle cx="14.500" cy="14" r="1.500" fill="#fff" stroke="none" /></svg></TrayIcon>
          <TrayIcon><svg width="20" height="18" viewBox="0 0 20 18" fill="none" stroke="#e0e3e6"><path d="M1 6h3l5-4v14l-5-4H1zM12 6a4 4 0 010 6M15 3a8 8 0 010 12" /></svg></TrayIcon>
          <TrayIcon><FaDropbox size={19} color="#fff" /></TrayIcon>
          <Lng>ENG<br />UKX</Lng>
          <Clock>12:13<br />27/01/2020</Clock>
          <Notif><svg width="20" height="20" viewBox="0 0 20 20" fill="none" stroke="#fff"><path d="M.5.500h19v16h-7L10 19l-2.500-2.500h-7z" /></svg></Notif>
        </Tray>
      </Taskbar>
    </Shell>
  );
}
